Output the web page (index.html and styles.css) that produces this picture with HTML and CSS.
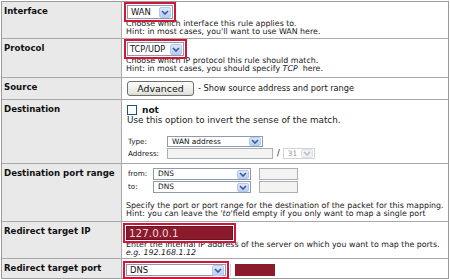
FILE: index.html
```html
<!DOCTYPE html>
<html>
<head>
<meta charset="utf-8">
<link rel="stylesheet" href="styles.css">
</head>
<body>
<div class="form">
  <div class="lbl">Interface</div>
  <div class="val">
    <span class="sel hl s-wan"><span class="st">WAN</span><span class="arr"><svg width="8" height="5" viewBox="0 0 8 5"><path d="M1 1l3 3 3-3" fill="none" stroke="#3b5998" stroke-width="1.6"/></svg></span></span>
    <div class="hint h1">Choose which interface this rule applies to.<br>Hint: in most cases, you'll want to use WAN here.</div>
  </div>

  <div class="lbl">Protocol</div>
  <div class="val">
    <span class="sel hl s-proto"><span class="st">TCP/UDP</span><span class="arr"><svg width="8" height="5" viewBox="0 0 8 5"><path d="M1 1l3 3 3-3" fill="none" stroke="#3b5998" stroke-width="1.6"/></svg></span></span>
    <div class="hint h1">Choose which IP protocol this rule should match.<br>Hint: in most cases, you should specify <i>TCP</i> &nbsp;here.</div>
  </div>

  <div class="lbl">Source</div>
  <div class="val row-src">
    <span class="btn">Advanced</span><span class="src-t">- Show source address and port range</span>
  </div>

  <div class="lbl">Destination</div>
  <div class="val">
    <div class="chkrow"><span class="chk"></span><b>not</b></div>
    <div class="hint big">Use this option to invert the sense of the match.</div>
    <div class="addr">
      <span class="al">Type:</span>
      <span class="sel s-type"><span class="st sm">WAN address</span><span class="arr sm"><svg width="8" height="5" viewBox="0 0 8 5"><path d="M1 1l3 3 3-3" fill="none" stroke="#3b5998" stroke-width="1.6"/></svg></span></span>
      <span class="al">Address:</span>
      <span class="arow"><span class="inp i-addr"></span><span class="slash">/</span><span class="sel dis s-mask"><span class="st sm">31</span><span class="arr sm dis"><svg width="8" height="5" viewBox="0 0 8 5"><path d="M1 1l3 3 3-3" fill="none" stroke="#b9c0cc" stroke-width="1.6"/></svg></span></span></span>
    </div>
  </div>

  <div class="lbl">Destination port range</div>
  <div class="val">
    <div class="ports">
      <span class="al">from:</span>
      <span class="prow"><span class="sel s-port"><span class="st sm">DNS</span><span class="arr sm"><svg width="8" height="5" viewBox="0 0 8 5"><path d="M1 1l3 3 3-3" fill="none" stroke="#3b5998" stroke-width="1.6"/></svg></span></span><span class="inp i-port"></span></span>
      <span class="al">to:</span>
      <span class="prow"><span class="sel s-port"><span class="st sm">DNS</span><span class="arr sm"><svg width="8" height="5" viewBox="0 0 8 5"><path d="M1 1l3 3 3-3" fill="none" stroke="#3b5998" stroke-width="1.6"/></svg></span></span><span class="inp i-port"></span></span>
    </div>
    <div class="hint h2">Specify the port or port range for the destination of the packet for this mapping.<br>Hint: you can leave the <i>'to'</i>field empty if you only want to map a single port</div>
  </div>

  <div class="lbl">Redirect target IP</div>
  <div class="val">
    <span class="ipin hl">127.0.0.1</span>
    <div class="hint h3">Enter the internal IP address of the server on which you want to map the ports.<br><i>e.g. 192.168.1.12</i></div>
  </div>

  <div class="lbl last">Redirect target port</div>
  <div class="val last rport">
    <span class="sel hl s-rport"><span class="st">DNS</span><span class="arr"><svg width="8" height="5" viewBox="0 0 8 5"><path d="M1 1l3 3 3-3" fill="none" stroke="#3b5998" stroke-width="1.6"/></svg></span></span>
    <span class="sep"></span>
    <span class="darkbox"></span>
  </div>
</div>
</body>
</html>
```

FILE: styles.css
```css
* { box-sizing: border-box; }
html, body { margin: 0; padding: 0; background: #fff; }
body {
  font-family: "DejaVu Sans", Verdana, sans-serif;
  color: #151515;
  width: 450px;
  height: 279px;
  overflow: hidden;
}
.form {
  margin: 1px 0 0 1px;
  width: 448px;
  border: 1px solid #9c9c9c;
  border-bottom: none;
  display: grid;
  grid-template-columns: 120px 1fr;
  grid-template-rows: 37px 39px 22px 64px 58px 37px 20px;
}
.lbl {
  background: #e9e9e9;
  border-right: 1px solid #a9a9a9;
  border-bottom: 1px solid #a9a9a9;
  font-weight: bold;
  font-size: 8.6px;
  line-height: 10px;
  padding: 4px 0 0 2px;
  color: #111;
  white-space: nowrap;
}
.val {
  border-bottom: 1px solid #a9a9a9;
  padding: 3px 0 0 5px;
  font-size: 7.9px;
  line-height: 8px;
  position: relative;
  white-space: nowrap;
}
.last { border-bottom: 1px solid #9c9c9c; }
.hint { color: #1a1a1a; }
.hint.big { font-size: 8.8px; line-height: 9px; }
.h1 { margin-top: 1px; margin-left: -1px; }
.h2 { margin-top: 9px; margin-left: -1px; }
.h3 { margin-top: 1px; margin-left: -1px; }

.sel {
  display: flex;
  align-items: center;
  background: #fff;
  border: 1px solid #8c9bb0;
  height: 14px;
}
.st { font-size: 8.4px; padding-left: 3px; color: #111; white-space: nowrap; }
.st.sm { font-size: 7.4px; padding-left: 4px; }
.arr {
  margin-left: auto;
  margin-right: 1px;
  width: 12px;
  height: 11px;
  border-radius: 2px;
  background: linear-gradient(#dce7fe, #b8cdf8);
  border: 1px solid #b6c8ee;
  display: flex;
  align-items: center;
  justify-content: center;
  flex: none;
}
.arr.sm { width: 12px; height: 9px; }
.arr.dis { background: #eef0f4; border-color: #e0e3ea; }
.hl { outline: 2px solid #d2163a; outline-offset: 1px; }

.s-wan { width: 46px; }
.s-proto { width: 57px; }
.s-proto .st { font-size: 8.2px; padding-left: 2px; }

.row-src { display: flex; align-items: flex-start; padding-top: 3px; }
.btn {
  width: 67px;
  height: 15px;
  border: 1px solid #6f6f6f;
  border-radius: 3px;
  background: linear-gradient(#fbfbf9, #e6e6e0 85%, #d6d6d0);
  font-size: 9.4px;
  line-height: 13px;
  text-align: center;
  color: #111;
}
.src-t { font-size: 8.2px; line-height: 15px; margin-left: 4px; }

.chkrow { display: flex; align-items: center; margin-top: 2px; height: 10px; }
.chk {
  width: 10px;
  height: 10px;
  border: 1px solid #1c5180;
  background: #fff;
  margin-right: 5px;
}
.chkrow b { font-size: 9px; }
.chkrow + .hint { margin-top: 1px; }

.addr {
  display: grid;
  grid-template-columns: 40px auto;
  row-gap: 1px;
  margin-top: 11px;
  align-items: center;
  font-size: 7px;
}
.al { font-size: 7.2px; padding-left: 1px; }
.s-type { width: 96px; height: 11px; }
.arow { display: flex; align-items: center; }
.inp { display: block; border: 1px solid #a8afb8; background: #f3f3f1; }
.i-addr { width: 106px; height: 11px; }
.slash { font-size: 8px; margin: 0 3px 0 4px; }
.sel.dis { border-color: #d0d4da; }
.s-mask { width: 32px; height: 11px; }
.s-mask .st { color: #9a9a9a; }

.ports {
  display: grid;
  grid-template-columns: 26px auto;
  row-gap: 1px;
  margin-top: 1px;
  align-items: center;
}
.prow { display: flex; align-items: center; }
.s-port { width: 98px; height: 12px; }
.i-port { width: 39px; height: 12px; margin-left: 8px; }

.ipin {
  display: block;
  width: 107px;
  height: 14px;
  margin-top: 1px;
  margin-left: -1px;
  background: #8b1b2c;
  border: 1px solid #6d1320;
  color: #eadada;
  font-size: 10.4px;
  line-height: 12px;
  padding-left: 2px;
  position: relative;
  z-index: 1;
}

.rport { display: flex; align-items: flex-start; padding-top: 5px; padding-left: 4px; }
.s-rport { width: 100px; height: 12px; }
.sep { width: 2px; height: 12px; border-left: 1px solid #c8d6ee; margin-left: 4px; }
.darkbox { width: 40px; height: 12px; background: #8b1b2c; margin-left: 3px; }
```
